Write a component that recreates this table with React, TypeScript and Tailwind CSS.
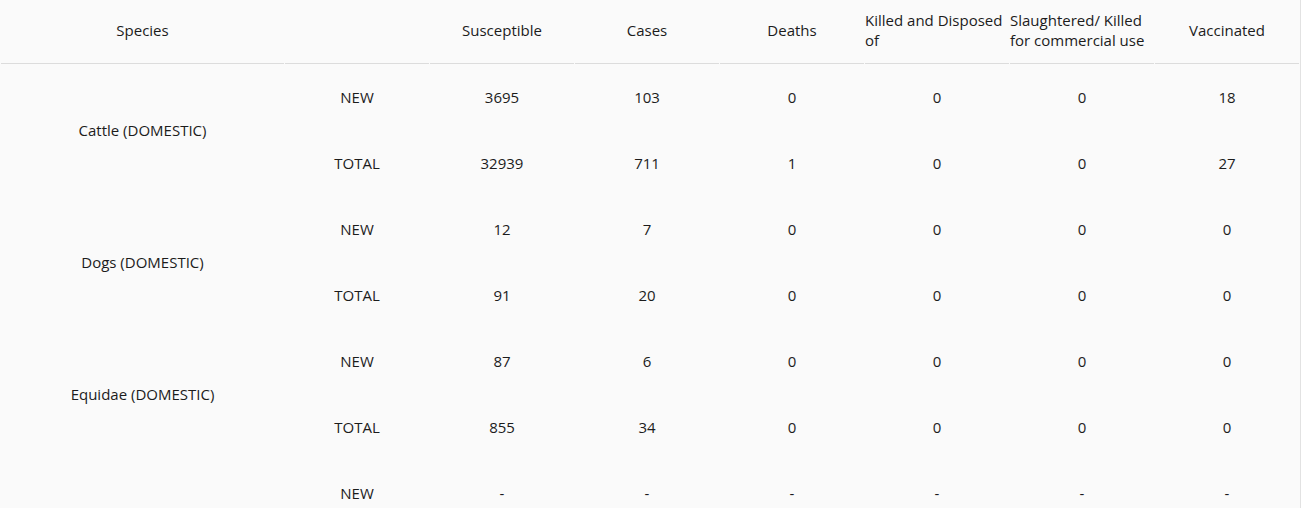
const headers = [
  'Species',
  '',
  'Susceptible',
  'Cases',
  'Deaths',
  'Killed and Disposed of',
  'Slaughtered/ Killed for commercial use',
  'Vaccinated',
]

type Row = { species: string; rows: { label: string; values: string[] }[] }

const data: Row[] = [
  {
    species: 'Cattle (DOMESTIC)',
    rows: [
      { label: 'NEW', values: ['3695', '103', '0', '0', '0', '18'] },
      { label: 'TOTAL', values: ['32939', '711', '1', '0', '0', '27'] },
    ],
  },
  {
    species: 'Dogs (DOMESTIC)',
    rows: [
      { label: 'NEW', values: ['12', '7', '0', '0', '0', '0'] },
      { label: 'TOTAL', values: ['91', '20', '0', '0', '0', '0'] },
    ],
  },
  {
    species: 'Equidae (DOMESTIC)',
    rows: [
      { label: 'NEW', values: ['87', '6', '0', '0', '0', '0'] },
      { label: 'TOTAL', values: ['855', '34', '0', '0', '0', '0'] },
    ],
  },
  {
    species: '',
    rows: [
      { label: 'NEW', values: ['-', '-', '-', '-', '-', '-'] },
      { label: 'TOTAL', values: ['-', '-', '-', '-', '-', '-'] },
    ],
  },
]

export default function App() {
  return (
    <div className="h-[508px] w-[1305px] overflow-hidden bg-white font-['Open_Sans',sans-serif] text-[15px] text-[#1c1c1c]">
      <div className="w-[1301px] border-r border-[#e2e2e2] bg-[#fafafa]">
        <table className="table-fixed border-separate border-spacing-x-px border-spacing-y-0">
          <colgroup>
            <col className="w-[283px]" />
            {headers.slice(1).map((_, i) => (
              <col key={i} className="w-[144px]" />
            ))}
          </colgroup>
          <thead>
            <tr>
              {headers.map((h, i) => (
                <th key={i} className="h-[64px] border-b border-[#dcdcdc] p-0 pb-[4px] font-normal">
                  {/* flex keeps wrapped header text left-aligned but the block centered */}
                  <div className="flex items-center justify-center text-left leading-[20px]">
                    <span>{h}</span>
                  </div>
                </th>
              ))}
            </tr>
          </thead>
          <tbody>
            {data.map((group, gi) =>
              group.rows.map((r, ri) => (
                <tr key={`${gi}-${ri}`}>
                  {ri === 0 && (
                    <td rowSpan={2} className="p-0 text-center align-middle">
                      {group.species}
                    </td>
                  )}
                  <td className="h-[66px] p-0 text-center align-middle">{r.label}</td>
                  {r.values.map((v, vi) => (
                    <td key={vi} className="h-[66px] p-0 text-center align-middle">
                      {v}
                    </td>
                  ))}
                </tr>
              ))
            )}
          </tbody>
        </table>
      </div>
    </div>
  )
}
